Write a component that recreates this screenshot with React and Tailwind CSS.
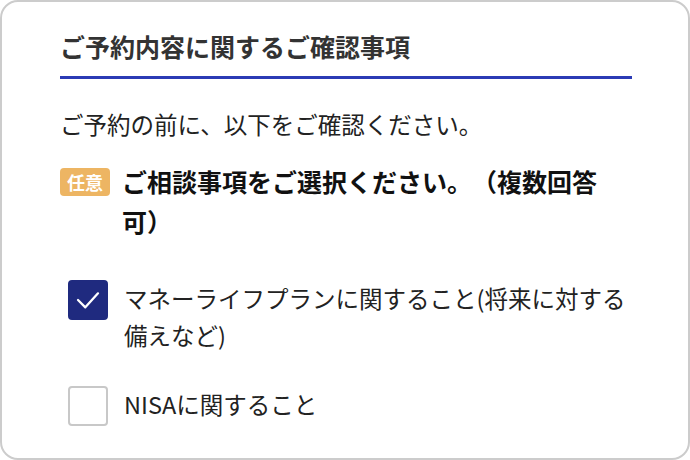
import React, { useState } from 'react';

const font = { fontFamily: '"Noto Sans CJK JP", "Noto Sans", sans-serif' };

const options = [
  { label: 'マネーライフプランに関すること(将来に対する備えなど)', checked: true },
  { label: 'NISAに関すること', checked: false },
];

const CheckBox = ({ checked }) => (
  <span
    className={`flex h-[40px] w-[40px] shrink-0 items-center justify-center rounded-[4px] border-2 ${
      checked ? 'border-[#1f2a7f] bg-[#1f2a7f]' : 'border-[#c8c8c8] bg-white'
    }`}
  >
    {checked && (
      <svg viewBox="0 0 24 24" className="h-[32px] w-[32px]" fill="none" stroke="white" strokeWidth="1.7" strokeLinecap="round" strokeLinejoin="round">
        <polyline points="4.5,12 10,17.5 19.5,7" />
      </svg>
    )}
  </span>
);

export default function App() {
  const [checks, setChecks] = useState(options.map((o) => o.checked));

  return (
    <div style={font} className="h-[460px] w-[690px] overflow-hidden bg-white [text-spacing-trim:space-all]">
      <div className="h-full w-full rounded-[18px] border-2 border-[#cccccc] pl-[58px] pr-[56px] pt-[26px]">
        {/* Title */}
        <h2 className="border-b-[3px] border-[#2b3bb5] pb-[12px] text-[25px] font-bold leading-[36px] text-[#333333]">
          ご予約内容に関するご確認事項
        </h2>

        <p className="mt-[28px] text-[23.5px] leading-[34px] text-[#222222]">
          ご予約の前に、以下をご確認ください。
        </p>

        {/* Question */}
        <div className="mt-[20px] flex items-start gap-[12px]">
          <span className="mt-[7px] shrink-0 rounded-[4px] bg-[#edb563] px-[7px] text-[18px] font-bold leading-[28px] text-white">
            任意
          </span>
          <p className="max-w-[500px] text-[25px] font-bold leading-[40px] text-[#111111]">
            ご相談事項をご選択ください。（複数回答可）
          </p>
        </div>

        {/* Options */}
        <div className="mt-[39px] flex flex-col gap-[32px] pl-[8px]">
          {options.map((o, i) => (
            <label
              key={i}
              className="flex cursor-pointer items-start gap-[16px]"
              onClick={() => setChecks(checks.map((c, j) => (j === i ? !c : c)))}
            >
              <CheckBox checked={checks[i]} />
              <span className="max-w-[505px] text-[23.5px] leading-[37px] text-[#222222]">{o.label}</span>
            </label>
          ))}
        </div>
      </div>
    </div>
  );
}
